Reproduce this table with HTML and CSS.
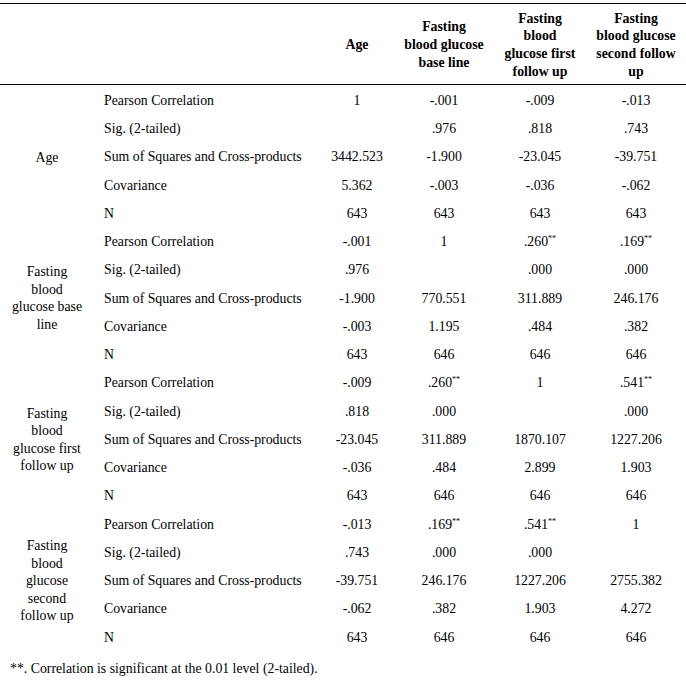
FILE: index.html
```html
<!DOCTYPE html>
<html>
<head>
<meta charset="utf-8">
<link rel="stylesheet" href="styles.css">
</head>
<body>
<div class="wrap">
<table class="corr">
<colgroup>
<col class="c-group"><col class="c-stat"><col class="c-age"><col class="c-base"><col class="c-first"><col class="c-second">
</colgroup>
<thead>
<tr class="head">
<th></th><th></th>
<th>Age</th>
<th>Fasting<br>blood glucose<br>base line</th>
<th>Fasting<br>blood<br>glucose first<br>follow up</th>
<th>Fasting<br>blood glucose<br>second follow<br>up</th>
</tr>
</thead>
<tbody>
<tr><td class="grp" rowspan="5">Age</td><td class="lbl">Pearson Correlation</td><td>1</td><td>-.001</td><td>-.009</td><td>-.013</td></tr>
<tr><td class="lbl">Sig. (2-tailed)</td><td></td><td>.976</td><td>.818</td><td>.743</td></tr>
<tr><td class="lbl">Sum of Squares and Cross-products</td><td>3442.523</td><td>-1.900</td><td>-23.045</td><td>-39.751</td></tr>
<tr><td class="lbl">Covariance</td><td>5.362</td><td>-.003</td><td>-.036</td><td>-.062</td></tr>
<tr><td class="lbl">N</td><td>643</td><td>643</td><td>643</td><td>643</td></tr>

<tr><td class="grp" rowspan="5">Fasting<br>blood<br>glucose base<br>line</td><td class="lbl">Pearson Correlation</td><td>-.001</td><td>1</td><td>.260<sup>**</sup></td><td>.169<sup>**</sup></td></tr>
<tr><td class="lbl">Sig. (2-tailed)</td><td>.976</td><td></td><td>.000</td><td>.000</td></tr>
<tr><td class="lbl">Sum of Squares and Cross-products</td><td>-1.900</td><td>770.551</td><td>311.889</td><td>246.176</td></tr>
<tr><td class="lbl">Covariance</td><td>-.003</td><td>1.195</td><td>.484</td><td>.382</td></tr>
<tr><td class="lbl">N</td><td>643</td><td>646</td><td>646</td><td>646</td></tr>

<tr><td class="grp" rowspan="5">Fasting<br>blood<br>glucose first<br>follow up</td><td class="lbl">Pearson Correlation</td><td>-.009</td><td>.260<sup>**</sup></td><td>1</td><td>.541<sup>**</sup></td></tr>
<tr><td class="lbl">Sig. (2-tailed)</td><td>.818</td><td>.000</td><td></td><td>.000</td></tr>
<tr><td class="lbl">Sum of Squares and Cross-products</td><td>-23.045</td><td>311.889</td><td>1870.107</td><td>1227.206</td></tr>
<tr><td class="lbl">Covariance</td><td>-.036</td><td>.484</td><td>2.899</td><td>1.903</td></tr>
<tr><td class="lbl">N</td><td>643</td><td>646</td><td>646</td><td>646</td></tr>

<tr><td class="grp" rowspan="5">Fasting<br>blood<br>glucose<br>second<br>follow up</td><td class="lbl">Pearson Correlation</td><td>-.013</td><td>.169<sup>**</sup></td><td>.541<sup>**</sup></td><td>1</td></tr>
<tr><td class="lbl">Sig. (2-tailed)</td><td>.743</td><td>.000</td><td>.000</td><td></td></tr>
<tr><td class="lbl">Sum of Squares and Cross-products</td><td>-39.751</td><td>246.176</td><td>1227.206</td><td>2755.382</td></tr>
<tr><td class="lbl">Covariance</td><td>-.062</td><td>.382</td><td>1.903</td><td>4.272</td></tr>
<tr><td class="lbl">N</td><td>643</td><td>646</td><td>646</td><td>646</td></tr>
</tbody>
<tfoot>
<tr><td class="note" colspan="6">**. Correlation is significant at the 0.01 level (2-tailed).</td></tr>
</tfoot>
</table>
</div>
</body>
</html>
```

FILE: styles.css
```css
html, body {
  margin: 0;
  padding: 0;
  background: #fff;
}
.wrap {
  padding-top: 3px;
}
.corr {
  width: 686px;
  border-collapse: collapse;
  table-layout: fixed;
  font-family: "Liberation Serif", "Times New Roman", serif;
  font-size: 13.8px;
  color: #000;
}
.c-group { width: 94px; }
.c-stat { width: 226px; }
.c-age { width: 74px; }
.c-base { width: 100px; }
.c-first { width: 92px; }
.c-second { width: 100px; }

.head {
  border-top: 1px solid #000;
  border-bottom: 1px solid #000;
  height: 81px;
}
.head th {
  font-weight: bold;
  text-align: center;
  vertical-align: middle;
  line-height: 17.7px;
  padding: 2px 0 0;
  white-space: nowrap;
}
tbody tr {
  height: 28.25px;
}
tbody td {
  text-align: center;
  vertical-align: middle;
  padding: 4px 2px 0;
  line-height: 17.5px;
  white-space: nowrap;
}
tbody td.lbl {
  text-align: left;
  padding-left: 10px;
}
tbody td.grp {
  text-align: center;
}
sup {
  font-size: 8px;
  line-height: 0;
  vertical-align: 5px;
}
.note {
  text-align: left;
  padding: 4px 0 0 10px;
  height: 30px;
  vertical-align: middle;
  border-bottom: 1px solid #000;
}
```
